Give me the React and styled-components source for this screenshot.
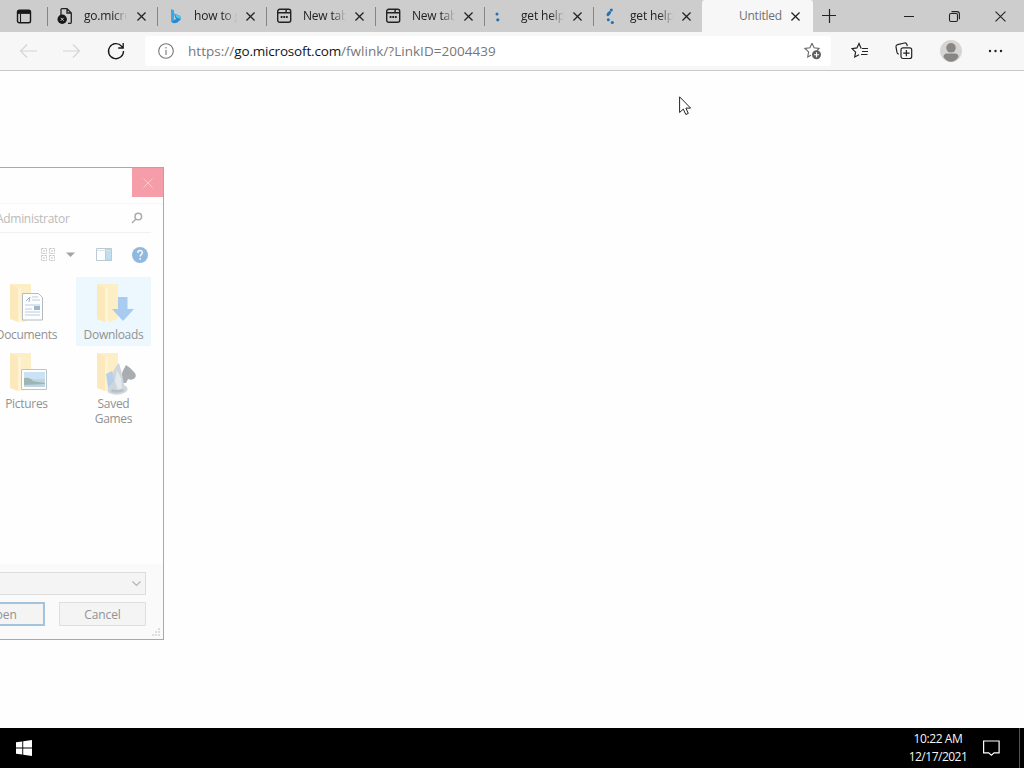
import React from "react";
import styled, { createGlobalStyle } from "styled-components";

const Global = createGlobalStyle`
  * { box-sizing: border-box; }
  body { margin: 0; background: #fefefe; overflow: hidden; font-family: "Open Sans", "Noto Sans", sans-serif; font-size: 12px; color: #1b1b1b; }
  svg { display: block; flex: none; overflow: visible; }
`;

const Screen = styled.div`
  position: relative;
  display: flex;
  flex-direction: column;
  width: 1024px;
  height: 768px;
  overflow: hidden;
`;

const TabStrip = styled.header`
  display: flex;
  height: 32px;
  background: #cdcdcd;
`;

const TabActions = styled.div`
  width: 47px;
  padding: 9px 0 0 16px;
`;

const Tab = styled.div`
  display: flex;
  align-items: center;
  width: ${(p) => (p.$active ? 111 : p.$width || 109)}px;
  height: 32px;
  padding-left: ${(p) => (p.$active ? 0 : 10)}px;
  background: ${(p) => (p.$active ? "#f7f7f7" : "transparent")};
  border-radius: ${(p) => (p.$active ? "3px 3px 0 0" : "0")};
  position: relative;
  &::before {
    content: "";
    display: ${(p) => (p.$active ? "none" : "block")};
    position: absolute;
    left: 0;
    top: 7px;
    width: 1px;
    height: 19px;
    background: #858585;
  }
`;

const TabIcon = styled.span`
  width: 16px;
  height: 16px;
`;

const TabTitle = styled.span`
  width: ${(p) => (p.$active ? 46 : 43)}px;
  margin-left: ${(p) => (p.$active ? 37 : 11)}px;
  overflow: hidden;
  white-space: nowrap;
  line-height: 18px;
  letter-spacing: ${(p) => p.$spacing || -0.1}px;
  color: ${(p) => (p.$active ? "#707070" : "#222")};
  mask-image: ${(p) => (p.$active ? "none" : "linear-gradient(90deg, #000 68%, transparent 100%)")};
`;

const TabClose = styled.span`
  margin-left: ${(p) => (p.$active ? 6 : p.$gap || 9)}px;
`;

const NewTab = styled.div`
  padding: 9px 0 0 9px;
`;

const WindowControls = styled.div`
  display: flex;
  align-items: center;
  gap: 35px;
  margin-left: auto;
  padding-right: 18px;
`;

const Toolbar = styled.nav`
  display: flex;
  align-items: center;
  height: 39px;
  background: #f7f7f7;
  border-bottom: 1px solid #c9c9c9;
  padding-left: 19px;
`;

const NavButtons = styled.div`
  display: flex;
  align-items: center;
  gap: 26px;
  width: 126px;
`;

const AddressBar = styled.div`
  display: flex;
  align-items: center;
  width: 686px;
  height: 30px;
  padding: 0 9px 0 13px;
  border-radius: 3px;
  background: #fff;
`;

const Url = styled.span`
  flex: 1;
  margin-left: 14px;
  font-size: 13.5px;
  line-height: 20px;
  letter-spacing: ${(p) => p.$spacing}px;
  color: #777;
  b { color: #151515; font-weight: 400; letter-spacing: -0.18px; }
`;

const ToolbarActions = styled.div`
  display: flex;
  align-items: center;
  flex: 1;
  justify-content: space-between;
  padding: 0 22px 0 20px;
`;

const Page = styled.main`
  position: relative;
  flex: 1;
  background: #fefefe;
  overflow: hidden;
`;

const Dialog = styled.section`
  position: absolute;
  left: -60px;
  top: 96px;
  width: 224px;
  height: 473px;
  display: flex;
  flex-direction: column;
  border: 1px solid #a9a9ac;
  background: #fefefe;
  color: #929292;
`;

const DialogTitle = styled.div`
  display: flex;
  justify-content: flex-end;
  height: 36px;
  border-bottom: 1px solid #f6f6f6;
`;

const DialogClose = styled.div`
  display: grid;
  place-items: center;
  width: 31px;
  height: 29px;
  background: #f59da9;
`;

const SearchRow = styled.div`
  display: flex;
  align-items: center;
  justify-content: space-between;
  height: 29px;
  margin-right: 12px;
  padding: 0 8px 0 55px;
  border-bottom: 1px solid #f1f1f1;
  color: #bababa;
  letter-spacing: ${(p) => p.$spacing}px;
`;

const DialogTools = styled.div`
  display: flex;
  align-items: center;
  height: 44px;
  padding: 0 0 1px 100px;
`;

const CaretSlot = styled.span`
  margin: 0 21px 0 10px;
`;

const HelpSlot = styled.span`
  margin-left: 20px;
`;

const FileGrid = styled.div`
  display: grid;
  grid-template-columns: 75px 75px;
  grid-template-rows: 69px 80px;
  column-gap: 12px;
  padding-left: 48px;
  height: 287px;
`;

const FileTile = styled.div`
  display: flex;
  flex-direction: column;
  align-items: center;
  height: ${(p) => (p.$tall ? 83 : 69)}px;
  padding-top: 6px;
  text-align: center;
  line-height: 15px;
  letter-spacing: -0.3px;
  background: ${(p) => (p.$selected ? "#edf7fe" : "transparent")};
  svg { margin: 0 4px 2px 0; }
`;

const DialogFooter = styled.footer`
  position: relative;
  flex: 1;
  padding: 8px 17px 0 17px;
  background: #fafafa;
`;

const Combo = styled.div`
  display: flex;
  align-items: center;
  justify-content: flex-end;
  height: 23px;
  padding-right: 4px;
  border: 1px solid #dcdcdc;
  background: #f4f4f4;
`;

const ButtonRow = styled.div`
  display: flex;
  justify-content: flex-end;
  gap: 14px;
  margin-top: 7px;
`;

const DialogButton = styled.button`
  flex: none;
  width: 87px;
  height: 24px;
  padding: 0;
  font: inherit;
  letter-spacing: -0.1px;
  color: #929292;
  background: #f4f4f4;
  border: ${(p) => (p.$primary ? "2px solid #a3c4dc" : "1px solid #dfdfdf")};
`;

const Grip = styled.svg`
  position: absolute;
  right: 2px;
  bottom: 2px;
`;

const Pointer = styled.svg`
  position: absolute;
  left: 679px;
  top: 96px;
`;

const Taskbar = styled.footer`
  display: flex;
  align-items: center;
  height: 40px;
  padding-left: 16px;
  background: #000;
`;

const Clock = styled.div`
  width: 60px;
  margin-left: auto;
  margin-right: 5px;
  text-align: center;
  color: #f5f5f5;
  line-height: 18px;
  white-space: nowrap;
`;

const ClockLine = styled.div`
  letter-spacing: ${(p) => p.$spacing}px;
`;

const Notifications = styled.div`
  width: 46px;
  padding-left: 10px;
`;

const ShowDesktop = styled.div`
  width: 5px;
  height: 40px;
  border-left: 1px solid #555;
`;

const Cross = ({ size = 9, color = "#222", w = 1.4 }) => (
  <svg width={size} height={size} viewBox="0 0 10 10" stroke={color} strokeWidth={w} fill="none">
    <path d="M.5 .5l9 9M9.5 .5l-9 9" />
  </svg>
);

const BrokenPage = () => (
  <svg width="16" height="16" fill="none" stroke="#222" strokeWidth="1.3">
    <path d="M4 7V1.5Q4 .7 5 .7h5l4.3 4.3v9.3q0 1-1 1H11M10 .7V5h4.3" />
    <circle cx="5.2" cy="11.3" r="4.7" fill="#181818" stroke="none" />
    <path d="M3.700 9.800l3 3M6.700 9.800l-3 3" stroke="#ccc" strokeWidth="1" />
  </svg>
);

const Bing = () => (
  <svg width="16" height="16">
    <path d="M4 1l3 1.200v9.700L4 14z" fill="#38a9e6" />
    <path d="M7 5.500l5.200 2q2.400 1.500 1.500 4.100L10 14.700 7 15.200 4 14l3-2 2.500-1.200-1.200-.8z" fill="#228bd3" />
    <path d="M8 6l4.500 1.800q2 1.200 1.200 3.400L9.300 9.200z" fill="#4cc9ef" />
  </svg>
);

const NewTabPage = () => (
  <svg width="16" height="16" fill="none" stroke="#222" strokeWidth="1.400">
    <rect x="1.700" y="1.300" width="13" height="13" rx="2" />
    <path d="M2 4.800h6.500q1.200 0 1.500-1.200l.4-1.900M9.500 4.800h5" />
    <path d="M4.700 9h1.800M7.300 9h1.800M9.900 9h1.800" strokeWidth="1.800" />
  </svg>
);

const Dots = ({ more }) => (
  <svg width="16" height="16" fill="#286fae">
    {more ? (
      <>
        <circle cx="8.300" cy="2" r="1.500" />
        <path d="M6.800 2.800l1.500 1.800-2.100 2.900q-1.400 1.600-2.500 0-.7-1.300.7-2.700z" />
        <circle cx="5.300" cy="11.800" r="1.500" />
        <circle cx="9.300" cy="14.500" r="1.600" />
      </>
    ) : (
      <>
        <circle cx="3" cy="6" r="1.500" />
        <circle cx="3.800" cy="11.800" r="1.600" />
      </>
    )}
  </svg>
);

const Folder = ({ children }) => (
  <svg width="42" height="42" viewBox="0 0 42 42">
    <path d="M6 1h21v34l-7 4L6 36z" fill="#fdefc5" />
    <path d="M6 1l8 4v34l-8-3z" fill="#fbe9bb" />
    <path d="M14 5h3v34h-3z" fill="#fff3d6" />
    {children}
  </svg>
);

const DocumentsIcon = () => (
  <Folder>
    <path d="M18.500 10.500h16l4 4v22.500h-20z" fill="#fdfdfd" stroke="#b6bbc0" />
    <path d="M28 14h6M28 17h8M21 22h15M21 26h7M21 29h15M21 32h15" stroke="#b5cde2" />
    <path d="M22 18l4-4-1 5" stroke="#91b6da" fill="none" />
    <path d="M30 23h6v4h-6z" fill="#9fb7cb" />
  </Folder>
);

const DownloadsIcon = () => (
  <Folder>
    <path d="M27 14h9.500v12H43L32 38 21 26h6z" fill="#a9cbf0" />
  </Folder>
);

const PicturesIcon = () => (
  <Folder>
    <path d="M17.500 17.500h25v20h-25z" fill="#fdfdfd" stroke="#bcc4ca" />
    <path d="M20 20h21v7H20z" fill="#cbe2f5" />
    <path d="M20 27h21v8H20z" fill="#bfd5e2" />
    <path d="M20 26q6-1 9 3l12 2v1l-21 1z" fill="#9eb6b3" />
  </Folder>
);

const GamesIcon = () => (
  <Folder>
    <path d="M30 25q1-6 5-12 5 3 8 7 3 3 1 6-3 3-7 1l-2 4h-4z" fill="#a9adb0" />
    <path d="M18 41q-3-2 0-6l-2-11 5-3 5-8 2-2 2 7 2 9 1 6q6 3 2 7-8 5-17 1z" fill="#cfd7dc" />
    <path d="M15 22l6-3 2 10-6 7z" fill="#b7d0e8" />
    <path d="M26 18l-2 11 3 9 4-2-1-10z" fill="#e4e9ed" />
    <path d="M20 40q7 2 13-1l-1-2q-6 2-11 0z" fill="#b7c0c5" />
  </Folder>
);

const tabs = [
  { title: "go.microsoft", icon: <BrokenPage />, spacing: -0.2, width: 110, gap: 10 },
  { title: "how to get", icon: <Bing />, spacing: -0.15 },
  { title: "New tab", icon: <NewTabPage />, spacing: -0.2 },
  { title: "New tab", icon: <NewTabPage />, spacing: -0.2 },
  { title: "get help", icon: <Dots />, spacing: -0.15 },
  { title: "get help", icon: <Dots more />, spacing: -0.15 },
];

export default function App() {
  return (
    <Screen>
      <Global />
      <TabStrip>
        <TabActions>
          <svg width="16" height="15" fill="none" stroke="#181818" strokeWidth="1.4">
            <rect x="1.500" y="1.200" width="13" height="12.500" rx="1.800" />
            <path d="M1.500 3.200h13" strokeWidth="3.400" />
            <path d="M4.500 5v8.500" strokeWidth="1.100" />
          </svg>
        </TabActions>
        {tabs.map((t, i) => (
          <Tab key={i} $width={t.width}>
            <TabIcon>{t.icon}</TabIcon>
            <TabTitle $spacing={t.spacing}>{t.title}</TabTitle>
            <TabClose $gap={t.gap}><Cross /></TabClose>
          </Tab>
        ))}
        <Tab $active>
          <TabTitle $active $spacing={-0.25}>Untitled</TabTitle>
          <TabClose $active><Cross /></TabClose>
        </Tab>
        <NewTab>
          <svg width="14" height="14" stroke="#222" strokeWidth="1.200"><path d="M7.500 0v14M0 6.500h14" /></svg>
        </NewTab>
        <WindowControls>
          <svg width="10" height="10" stroke="#222"><path d="M0 5.500h10" /></svg>
          <svg width="11" height="11" fill="none" stroke="#222" strokeWidth="1.100">
            <rect x=".500" y="2.500" width="8" height="8" rx="1.500" />
            <path d="M2.500 .600h5.500q2.400 0 2.400 2.400v5.300" />
          </svg>
          <Cross size={11} w={1} />
        </WindowControls>
      </TabStrip>

      <Toolbar>
        <NavButtons>
          <svg width="18" height="14" fill="none" stroke="#d3d3d3" strokeWidth="1.100"><path d="M8 .500L1.500 7 8 13.500M1.500 7H18" /></svg>
          <svg width="18" height="14" fill="none" stroke="#d3d3d3" strokeWidth="1.100"><path d="M10 .500L16.500 7 10 13.500M16.500 7H0" /></svg>
          <svg width="18" height="18" fill="none" stroke="#181818" strokeWidth="1.300">
            <path d="M16.500 9A7.500 7.500 0 1 1 14.600 4.200L16 5.600M16.200 1v5h-5" />
          </svg>
        </NavButtons>
        <AddressBar>
          <svg width="16" height="16" fill="none" stroke="#777" strokeWidth="1.100">
            <circle cx="8" cy="8" r="7.300" /><path d="M8 7v5M8 4v1.400" />
          </svg>
          <Url $spacing={0.03}>https://<b>go.microsoft.com</b>/fwlink/?LinkID=2004439</Url>
          <svg width="18" height="18" fill="none" stroke="#666" strokeWidth="1.100">
            <path d="M8 1.200l2.100 4.500 5 .7-2.300 2.400M8 1.200L5.900 5.700l-5 .7 3.700 3.500-.9 5L7 13.200" />
            <circle cx="12.500" cy="12.800" r="4.500" fill="#606060" stroke="none" />
            <path d="M12.500 10.300v5M10 12.800h5" stroke="#fff" />
          </svg>
        </AddressBar>
        <ToolbarActions>
          <svg width="18" height="18" fill="none" stroke="#222" strokeWidth="1.200">
            <path d="M11 6.500H17M11 9.500h6M10 12.500h6.500M10.500 6.200H10L8 1.500 5.900 5.900l-4.800.7 3.500 3.500-.9 4.900L8 12.700" />
          </svg>
          <svg width="18" height="18" fill="none" stroke="#222" strokeWidth="1.200">
            <path d="M3.800 12.200Q2.300 12 2 10.500L1 4.900Q.8 3 2.600 2.700L9.600 1q1.600-.4 2.300 1.500l.4 1.700" />
            <rect x="6" y="5.800" width="10.700" height="10.700" rx="2" />
            <path d="M11.350 8v6.300M8.200 11.150h6.300" />
          </svg>
          <svg width="22" height="22">
            <circle cx="11" cy="11" r="11" fill="#d6d5d3" />
            <circle cx="11" cy="7.800" r="4.800" fill="#888786" />
            <path d="M3.500 17q0-3.500 3.500-3.500h8q3.500 0 3.500 3.500-3 4.700-7.500 4.700T3.500 17z" fill="#888786" />
          </svg>
          <svg width="14" height="4" fill="#222"><circle cx="2" cy="2" r="1.200" /><circle cx="7.500" cy="2" r="1.200" /><circle cx="13" cy="2" r="1.200" /></svg>
        </ToolbarActions>
      </Toolbar>

      <Page>
        <Dialog>
          <DialogTitle>
            <DialogClose><Cross size={10} color="#fac9d0" w={1} /></DialogClose>
          </DialogTitle>
          <SearchRow $spacing={-0.3}>
            Administrator
            <svg width="12" height="12" fill="none" stroke="#aaa" strokeWidth="1.500"><circle cx="7.300" cy="4.500" r="3.300" /><path d="M5 7L1 11" /></svg>
          </SearchRow>
          <DialogTools>
            <svg width="15" height="14" fill="none" stroke="#c5c5c5">
              <path d="M.500 .500h5v5h-5zM8.500 .500h5v5h-5zM.500 7.500h5v5h-5zM8.500 7.500h5v5h-5zM2 3h2M10 3h2M2 10h2M10 10h2" strokeDasharray="2 1" />
            </svg>
            <CaretSlot><svg width="9" height="5"><path d="M0 .500h9L4.500 5z" fill="#a4a4a4" /></svg></CaretSlot>
            <svg width="16" height="13" fill="none" stroke="#b9cbd5"><path d="M.500 .500h15v12H.500z" /><path d="M9.500 1h6v11h-6z" fill="#bfdff0" /><path d="M1 2.500h14" stroke="#dae4ea" /></svg>
            <HelpSlot>
              <svg width="16" height="16">
                <circle cx="8" cy="8" r="8" fill="#90b9df" />
                <path d="M5.700 5.900q.1-2.400 2.400-2.400t2.300 2q0 1.200-1.300 2.100-.9.700-.9 1.900M8.200 11v1.700" fill="none" stroke="#f4faff" strokeWidth="1.500" />
              </svg>
            </HelpSlot>
          </DialogTools>
          <FileGrid>
            <FileTile><DocumentsIcon />Documents</FileTile>
            <FileTile $selected><DownloadsIcon />Downloads</FileTile>
            <FileTile><PicturesIcon />Pictures</FileTile>
            <FileTile $tall><GamesIcon />Saved<br />Games</FileTile>
          </FileGrid>
          <DialogFooter>
            <Combo><svg width="9" height="5" fill="none" stroke="#b5b5b5" strokeWidth="1.200"><path d="M.500 .500l4 4 4-4" /></svg></Combo>
            <ButtonRow>
              <DialogButton $primary>Open</DialogButton>
              <DialogButton>Cancel</DialogButton>
            </ButtonRow>
            <Grip width="9" height="9" fill="#dedede"><path d="M6 0h2v2H6zM3 3h2v2H3zM6 3h2v2H6zM0 6h2v2H0zM3 6h2v2H3zM6 6h2v2H6z" /></Grip>
          </DialogFooter>
        </Dialog>
      </Page>

      <Taskbar>
        <svg width="16" height="16" fill="#fff"><path d="M0 2.300l6.300-.9v6.100H0zM7.200 1.200L16 0v7.500H7.200zM0 8.500h6.300v6.100L0 13.700zM7.200 8.500H16V16l-8.800-1.200z" /></svg>
        <Clock>
          <ClockLine $spacing={-0.4}>10:22 AM</ClockLine>
          <ClockLine $spacing={-0.5}>12/17/2021</ClockLine>
        </Clock>
        <Notifications>
          <svg width="17" height="16" fill="none" stroke="#fff" strokeWidth="1.200"><path d="M.600 1h15.500v11.800h-5l-2.700 2.500-2.700-2.500H.600z" /></svg>
        </Notifications>
        <ShowDesktop />
      </Taskbar>

      <Pointer width="12" height="20"><path d="M.600 .800v15.700l3.700-3.400 2.500 5.400 2.500-1.100-2.400-5.300h4.700z" fill="#fff" stroke="#222" strokeWidth="1" /></Pointer>
    </Screen>
  );
}
